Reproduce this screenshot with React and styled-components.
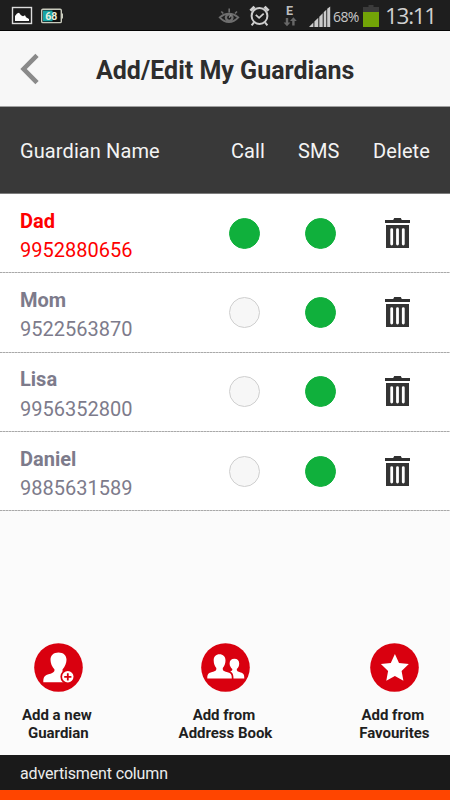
import React from 'react'
import styled, { createGlobalStyle } from 'styled-components'

const GlobalStyle = createGlobalStyle`
  * {
    box-sizing: border-box;
  }

  body {
    margin: 0;
    font-family: Roboto, sans-serif;
    background: #fbfbfb;
  }
`

const Screen = styled.div`
  width: 450px;
  height: 800px;
  overflow: hidden;
  display: flex;
  flex-direction: column;
  background: #fbfbfb;
`

const StatusBar = styled.div`
  height: 31px;
  flex: none;
  display: flex;
  align-items: flex-start;
  background: #1e1e1e;
  border-bottom: 1px solid #050505;

  svg {
    display: block;
    flex: none;
  }
`

const Percent = styled.span`
  width: 30px;
  margin-left: 2px;
  padding-top: 7px;
  font-family: 'Open Sans', sans-serif;
  font-size: 14px;
  line-height: 20px;
  letter-spacing: -0.6px;
  color: #c8c8c8;
`

const Clock = styled.span`
  margin-left: 6px;
  padding-top: 3px;
  font-family: 'Open Sans', sans-serif;
  font-size: 22.5px;
  line-height: 26px;
  letter-spacing: -1.3px;
  color: #d0d0d0;
`

const Header = styled.header`
  height: 76px;
  flex: none;
  display: flex;
  align-items: center;
  padding-left: 20px;
  background: #f7f7f7;
  border-bottom: 1px solid #a0a0a0;
`

const Title = styled.h1`
  margin: 4px 0 0 56px;
  font-size: 25px;
  line-height: 30px;
  font-weight: 700;
  color: #2d2d2d;
  white-space: nowrap;
`

const TableHead = styled.div`
  height: 87px;
  flex: none;
  display: grid;
  grid-template-columns: 211px 67px 75px 1fr;
  align-items: center;
  padding: 2px 0 0 20px;
  background: #393939;
  border-bottom: 1px solid #7c7c7c;
  font-size: 20px;
  line-height: 24px;
  letter-spacing: 0.1px;
  color: #f4f4f4;
`

const Row = styled.div`
  height: 79.3px;
  flex: none;
  display: grid;
  grid-template-columns: 209px 76px 80px 1fr;
  align-items: center;
  padding: 0 0 1px 20px;
  background: repeating-linear-gradient(90deg, #a9a9a9 0 2px, #cfcfcf 2px 3px) 0 100% / 100% 1px no-repeat #fff;
  color: ${props => (props.$active ? '#fe0000' : '#7d7b8b')};
  font-size: 20px;
  line-height: 29.5px;

  svg {
    display: block;
  }
`

const Contact = styled.div`
  padding-top: 6px;
`

const Name = styled.div`
  font-weight: 700;
`

const Toggle = styled.span`
  width: 31px;
  height: 31px;
  border-radius: 50%;
  background: ${props => (props.$on ? '#10b03c' : '#f7f7f7')};
  border: 1px solid ${props => (props.$on ? '#10b03c' : '#cfcfcf')};
`

const Actions = styled.div`
  flex: 1;
  display: flex;
  justify-content: space-between;
  align-items: flex-end;
  padding: 0 20.5px 13px 22px;
`

const Action = styled.div`
  display: flex;
  flex-direction: column;
  align-items: center;
  font-size: 15px;
  font-weight: 700;
  line-height: 17.5px;
  letter-spacing: -0.03px;
  color: #1f1f1f;

  svg {
    display: block;
    margin-bottom: 15px;
  }

  &:nth-child(2) {
    padding-right: 3px;
  }
`

const FirstLine = styled.span`
  padding-right: 3px;
`

const Advert = styled.footer`
  height: 45px;
  flex: none;
  padding: 9px 20px 0;
  background: #1a1a1a;
  border-bottom: 10px solid #ff4500;
  font-size: 16px;
  line-height: 20px;
  letter-spacing: -0.15px;
  color: #ececec;
`

const LeftStatusIcons = () => (
  <svg width="218" height="30" viewBox="0 0 218 30">
    <rect x="12.5" y="7.5" width="19" height="16" fill="#1b1b1b" stroke="#ddd" strokeWidth="1.4" />
    <path d="M15 21v-5l2-2.5 2-.7 2 2.4 2 1 2-1 1 2 3 1.8v2z" fill="#fff" />
    <rect x="41.7" y="9.2" width="19.6" height="13.4" rx="1.2" fill="#111" stroke="#c9cbbd" strokeWidth="1.4" />
    <path d="M43 10.5h9.5v10.8H43z" fill="#18a3a3" />
    <path d="M62 13.5h1v5h-1z" fill="#c9cbbd" />
    <text x="45.3" y="19.7" fontSize="10.5" fontWeight="700" fill="#e6eddd" fontFamily="Roboto, sans-serif">68</text>
  </svg>
)

const RightStatusIcons = () => (
  <svg width="113" height="30" viewBox="218 0 113 30">
    <g fill="none" stroke="#6e6e6e" strokeWidth="2">
      <path d="M219.8 17.4c5.5-5 13-5 18.4 0-5.5 6.2-13 6.2-18.4 0z" />
      <path d="M221.3 11.5l2 2M229.2 8.5v4M237 11.5l-2 2" strokeWidth="1.6" />
    </g>
    <circle cx="229.2" cy="17.6" r="4.4" fill="#6e6e6e" />
    <circle cx="229.2" cy="17.6" r="2.1" fill="#1e1e1e" />
    <path d="M229.2 17.6l2-3" stroke="#8a8a8a" strokeWidth="1.3" />
    <g fill="none" stroke="#cfcfcf">
      <circle cx="259.5" cy="16" r="7.9" strokeWidth="2" />
      <path d="M255.8 14.8l3.3 3 4.6-4.2" strokeWidth="1.8" />
      <path d="M250.5 10.7l4-4M268.5 10.7l-4-4" strokeWidth="3" />
      <path d="M254 22.3l-2.4 3M265 22.3l2.4 3" strokeWidth="2" />
    </g>
    <text x="286" y="15" fontSize="12.5" fontWeight="700" fill="#bdbdbd" fontFamily="Roboto, sans-serif">E</text>
    <path d="M285.8 18h2.4v4.5h2.2L287 26.3l-3.4-3.8h2.2zM292.2 25.5h2.4V21h2.2l-3.4-3.8-3.4 3.8h2.2z" fill="#686868" />
    <path d="M309 27l4.4-4.4V27zM314.4 21.6l3.9-3.9V27h-3.9zM319.3 16.7l3.4-3.4V27h-3.4zM323.7 12.3l2.6-2.6V27h-2.6zM327.2 8.8l3-2.4V27h-3z" fill="#cbcbcb" />
  </svg>
)

const BatteryIcon = () => (
  <svg width="16" height="30" viewBox="0 0 16 30">
    <path d="M0 7h5.5V5h5v2H16v5H0z" fill="#3b3b3b" />
    <path d="M0 12h16v15H0z" fill="#72a307" />
  </svg>
)

const BackIcon = () => (
  <svg width="20" height="32" viewBox="0 0 20 32">
    <path d="M17 2.4L3.6 16 17 29.6" fill="none" stroke="#8a8a8a" strokeWidth="4.6" />
  </svg>
)

const TrashIcon = () => (
  <svg width="25" height="31" viewBox="0 0 25 31">
    <path d="M0 2h8.2l1-2h6.6l1 2H25v3H0z" fill="#303030" />
    <path d="M1 7h23v23H1z" fill="#343434" />
    <path d="M6.7 11.6v14.4M12.5 11.6v14.4M18.3 11.6v14.4" stroke="#fff" strokeWidth="2.8" strokeLinecap="round" />
  </svg>
)

const NewGuardianIcon = () => (
  <svg width="49" height="49" viewBox="0 0 49 49">
    <circle cx="24.5" cy="24.5" r="24.3" fill="#d9000f" />
    <path d="M9.3 39.3c0-5.8 1.4-6.8 6-8.2 3.7-1.1 5.3-2 5.2-4.6-2.5-2.5-4-6.4-4-9.7 0-4.7 3.2-7.4 8-7.4s8 2.7 8 7.4c0 3.4-1.5 7-4 9.7 0 2.4.5 3.4 2.3 4v8.8z" fill="#fff" />
    <circle cx="33.8" cy="33.8" r="7.4" fill="#d9000f" />
    <circle cx="33.8" cy="33.8" r="5.7" fill="#fff" />
    <path d="M33.8 30.2v7.2M30.2 33.8h7.2" stroke="#d9000f" strokeWidth="1.8" />
  </svg>
)

const AddressBookIcon = () => (
  <svg width="49" height="49" viewBox="0 0 49 49">
    <circle cx="24.5" cy="24.5" r="24.3" fill="#d9000f" />
    <path d="M6.3 35.5c0-4 .6-5.2 3.5-6.1 3.7-1.1 6-1.6 5.5-4.5-1.5-1.7-2.6-4.2-2.6-7.4 0-3.9 2.2-6.2 5.8-6.2s6 2.3 6 6.2c0 3.2-1.2 5.7-2.7 7.4-.4 2.9 1.6 3.4 5.4 4.5 2.9.9 3.6 2.1 3.6 6.1z" fill="#fff" />
    <path d="M32.5 35.5c0-3.8-.7-5.8-3.2-6.9 1.6-.5 2.2-1.1 2-2.5-1.5-1.5-2.7-3.3-2.7-5.6 0-3 1.8-4.7 4.8-4.7s4.8 1.7 4.8 4.7c0 2.3-.9 4.2-2.4 5.6-.2 2.1.8 2.6 3.9 3.5 2.8.8 3.6 1.8 3.6 5.9z" fill="#fff" />
  </svg>
)

const FavouritesIcon = () => (
  <svg width="49" height="49" viewBox="0 0 49 49">
    <circle cx="24.5" cy="24.5" r="24.3" fill="#d9000f" />
    <path d="M24.9 11l4.1 8.9 9.8 1.2-7.2 6.8 1.8 9.8-8.5-4.8-8.6 4.8 1.8-9.8-7.2-6.8 9.9-1.2z" fill="#fff" />
  </svg>
)

const App = () => {

  const guardians = [
    { name: 'Dad', phone: '9952880656', call: true, sms: true },
    { name: 'Mom', phone: '9522563870', call: false, sms: true },
    { name: 'Lisa', phone: '9956352800', call: false, sms: true },
    { name: 'Daniel', phone: '9885631589', call: false, sms: true }
  ]

  return (
    <Screen>
      <GlobalStyle />
      <StatusBar>
        <LeftStatusIcons />
        <RightStatusIcons />
        <Percent>68%</Percent>
        <BatteryIcon />
        <Clock>13:11</Clock>
      </StatusBar>
      <Header>
        <BackIcon />
        <Title>Add/Edit My Guardians</Title>
      </Header>
      <TableHead>
        <span>Guardian Name</span>
        <span>Call</span>
        <span>SMS</span>
        <span>Delete</span>
      </TableHead>
      {guardians.map(guardian => (
        <Row key={guardian.name} $active={guardian.call}>
          <Contact>
            <Name>{guardian.name}</Name>
            <div>{guardian.phone}</div>
          </Contact>
          <Toggle $on={guardian.call} />
          <Toggle $on={guardian.sms} />
          <TrashIcon />
        </Row>
      ))}
      <Actions>
        <Action>
          <NewGuardianIcon />
          <FirstLine>Add a new</FirstLine>
          <span>Guardian</span>
        </Action>
        <Action>
          <AddressBookIcon />
          <FirstLine>Add from</FirstLine>
          <span>Address Book</span>
        </Action>
        <Action>
          <FavouritesIcon />
          <FirstLine>Add from</FirstLine>
          <span>Favourites</span>
        </Action>
      </Actions>
      <Advert>advertisment column</Advert>
    </Screen>
  )
}

export default App
